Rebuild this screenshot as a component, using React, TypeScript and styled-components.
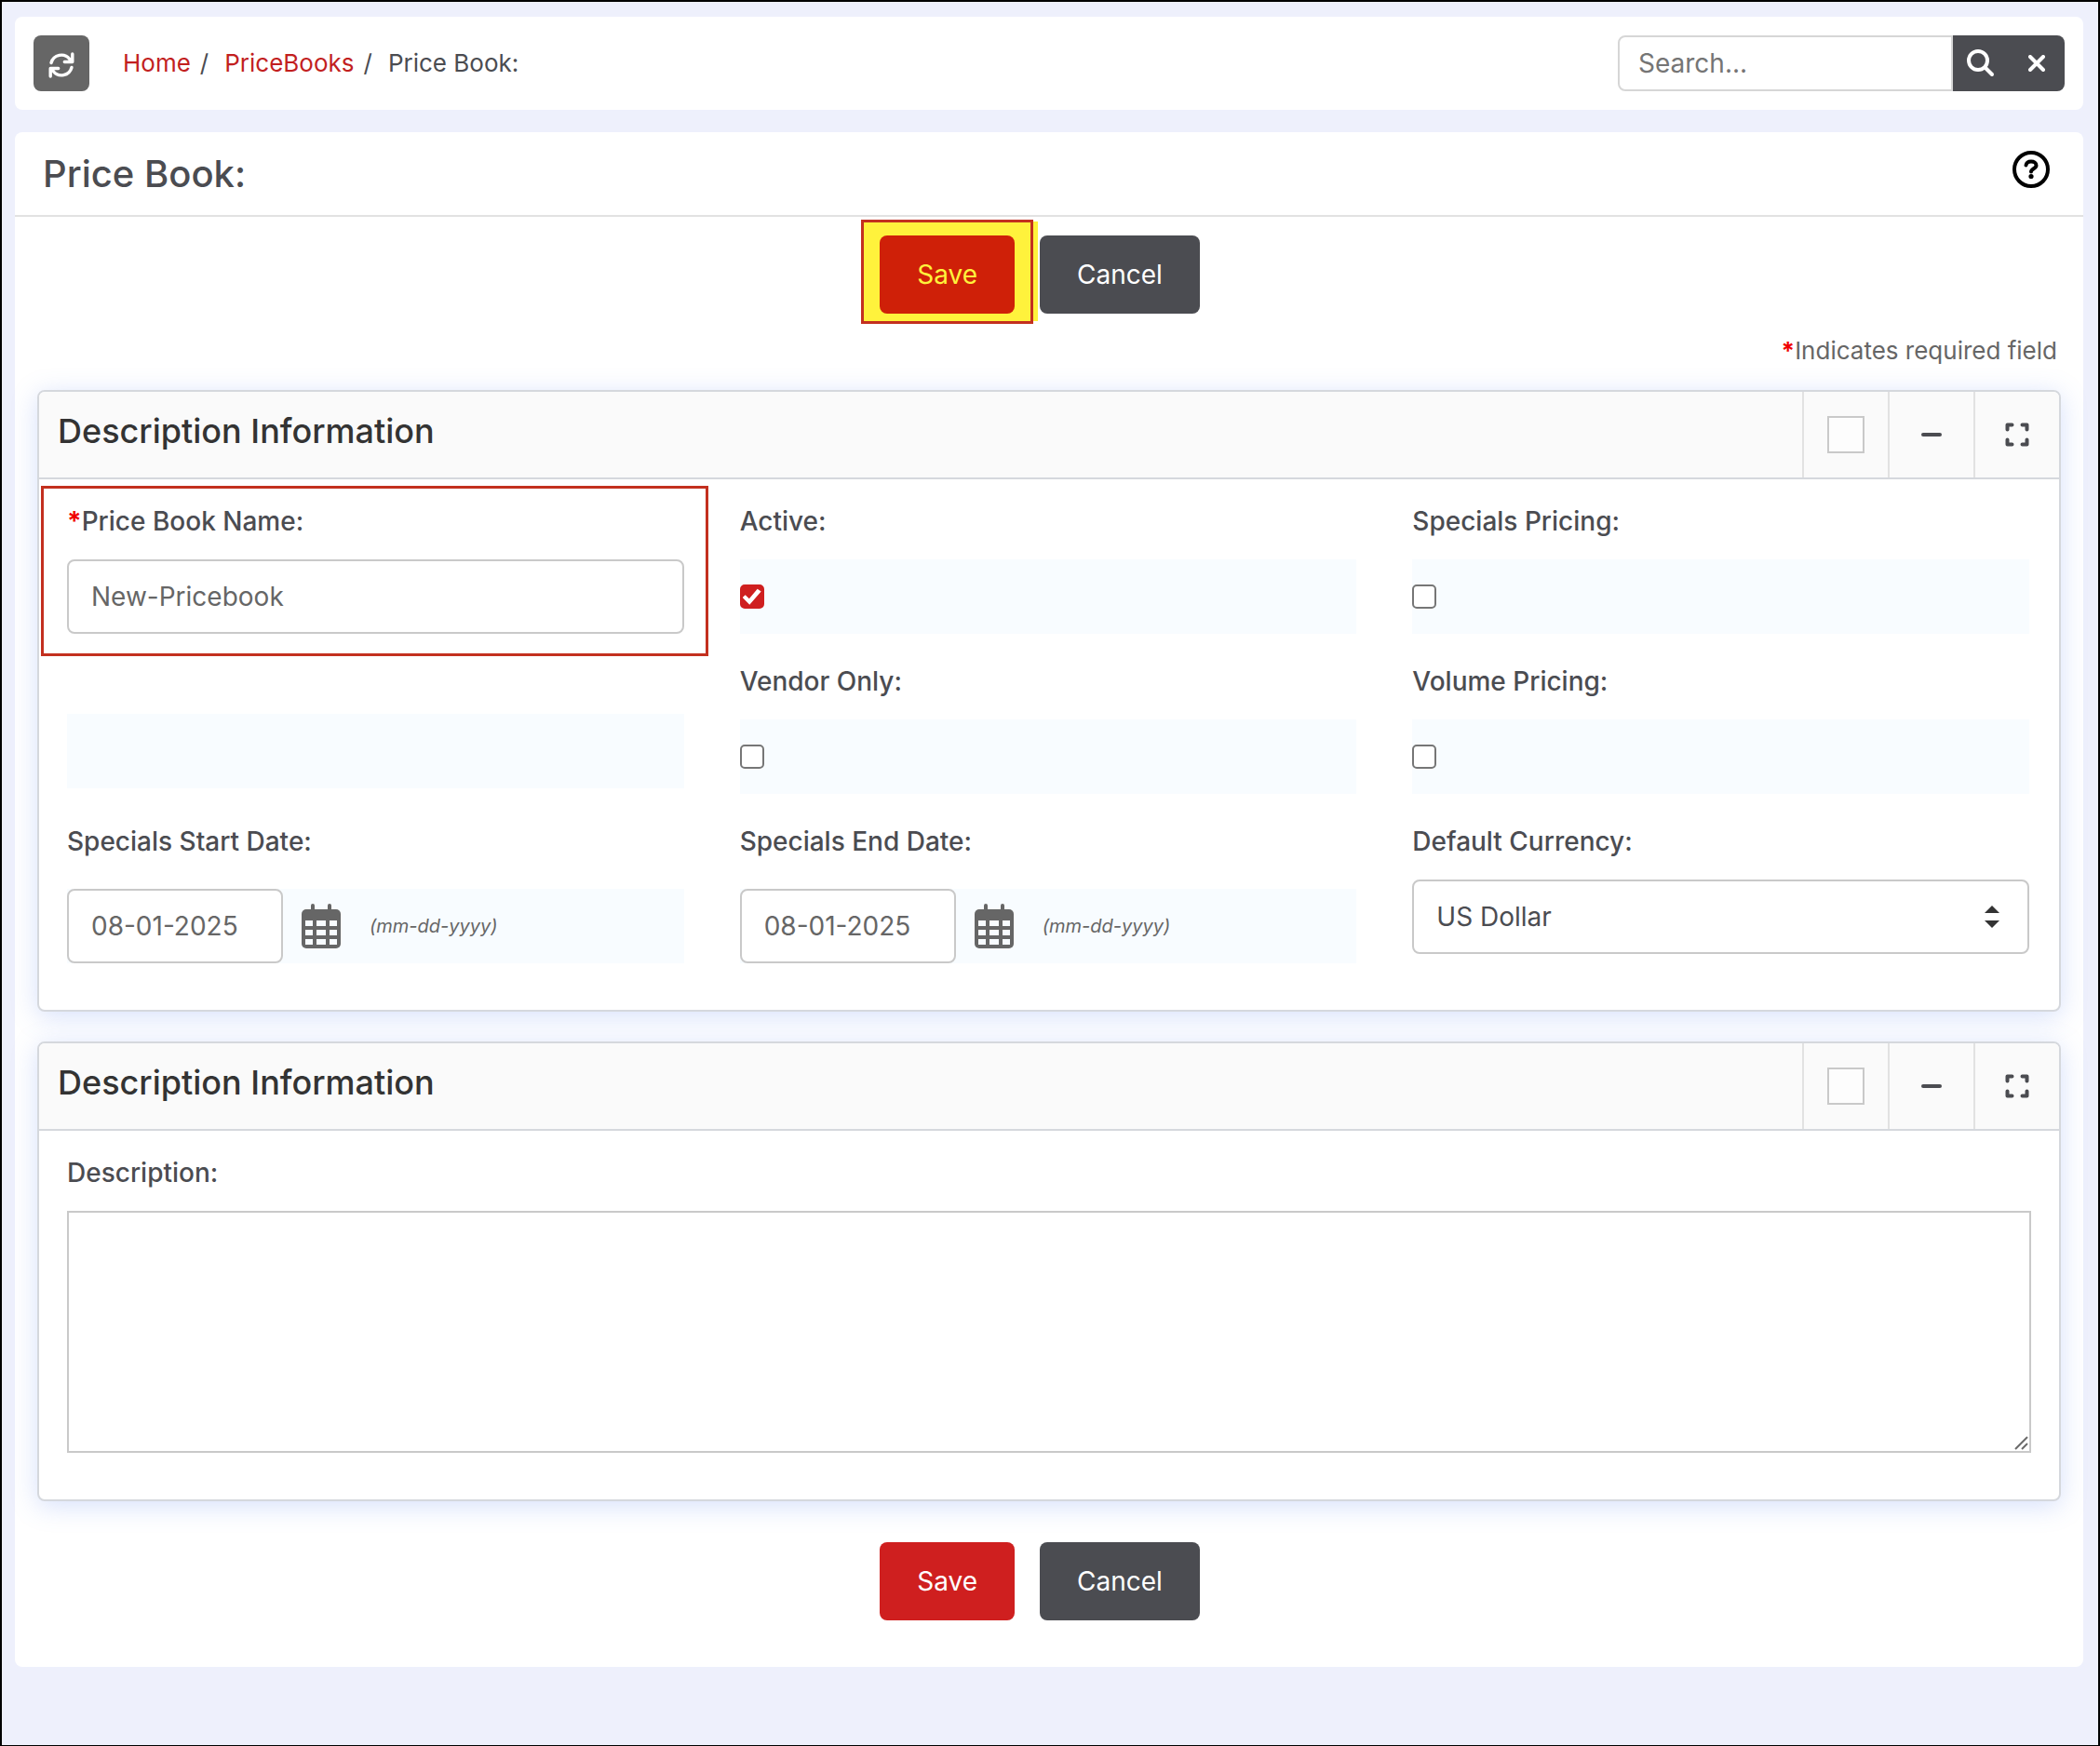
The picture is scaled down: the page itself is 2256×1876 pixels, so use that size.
import React, { useId } from "react";
import styled, { createGlobalStyle, css } from "styled-components";

const color = {
  page: "#eef0fc",
  text: "#4b4c51",
  muted: "#666666",
  heading: "#333333",
  red: "#cf1f1f",
  dark: "#4b4c51",
  line: "#e2e2e2",
  panelLine: "#d5d8dd",
  inputLine: "#c9c9c9",
  field: "#f8fcff",
  mark: "#c3301f",
};

const GlobalStyle = createGlobalStyle`
  *, *::before, *::after { box-sizing: border-box; }
  body { margin: 0; background: ${color.page}; }
  body, button, input, select, textarea {
    font-family: Inter, "Liberation Sans", sans-serif;
    font-size: 28px;
    color: ${color.text};
  }
  button { cursor: pointer; }
`;

const Frame = styled.div`
  min-height: 100vh;
  display: flex;
  flex-direction: column;
  gap: 24px;
  padding: 16px 16px 84px 14px;
  border: 2px solid #000;
  background: ${color.page};
`;

const TopBar = styled.header`
  display: flex;
  align-items: center;
  justify-content: space-between;
  padding: 20px;
  border-radius: 8px;
  background: #fff;
`;

const BarStart = styled.div`
  display: flex;
  align-items: center;
  gap: 36px;
`;

const RefreshButton = styled.button`
  display: grid;
  place-items: center;
  width: 60px;
  height: 60px;
  padding: 4px 0 0;
  border: 0;
  border-radius: 8px;
  background: ${color.muted};
  color: #fff;
`;

const Crumbs = styled.ol`
  display: flex;
  margin: 0;
  padding: 0;
  list-style: none;
  font-size: 26px;
  line-height: 40px;
`;

const Crumb = styled.li`
  & + &::before {
    content: "/";
    padding: 0 17px 0 10px;
  }
`;

const CrumbLink = styled.a`
  color: #c21f1f;
  text-decoration: none;
`;

const SearchForm = styled.form`
  display: flex;
  height: 60px;
`;

const SearchInput = styled.input`
  width: 360px;
  padding: 0 20px;
  border: 2px solid #d6d6d6;
  border-radius: 8px 0 0 8px;
  background: #fff;
  &::placeholder { color: #757575; opacity: 1; }
`;

const SearchButton = styled.button<{ $last?: boolean }>`
  display: grid;
  place-items: center;
  width: 60px;
  padding: 0;
  border: 0;
  border-radius: ${(p) => (p.$last ? "0 8px 8px 0" : "0")};
  background: ${color.dark};
  color: #fff;
`;

const Card = styled.main`
  border-radius: 8px;
  background: #fff;
`;

const CardHeader = styled.div`
  display: flex;
  justify-content: space-between;
  align-items: center;
  height: 91px;
  padding: 0 36px 0 30px;
  border-bottom: 2px solid ${color.line};
`;

const PageTitle = styled.h1`
  margin: 0;
  font-size: 40px;
  line-height: 48px;
  font-weight: 500;
`;

const HelpButton = styled.button`
  display: grid;
  place-items: center;
  padding: 0 0 10px;
  border: 0;
  background: none;
  color: #000;
`;

const Actions = styled.div`
  display: flex;
  justify-content: center;
  gap: 27px;
  padding: 20px 20px 0 0;
`;

const ActionButton = styled.button<{ $kind: "save" | "cancel"; $marked?: boolean }>`
  height: 84px;
  padding: 0 40px;
  border: 0;
  border-radius: 8px;
  background: ${(p) => (p.$kind === "cancel" ? color.dark : p.$marked ? "#cf2008" : color.red)};
  color: ${(p) => (p.$marked ? "#fff23c" : "#fff")};
`;

const Highlight = styled.div`
  position: relative;
  z-index: 0;
  display: flex;
  &::before {
    content: "";
    position: absolute;
    z-index: -2;
    inset: -15px -25px -8px -19px;
    background: #fff23c;
  }
  &::after {
    content: "";
    position: absolute;
    z-index: -1;
    inset: -17px -20px -11px -20px;
    border: 3px solid ${color.mark};
  }
`;

const RequiredNote = styled.p`
  margin: 0;
  padding: 20px 28px 22px;
  text-align: right;
  font-size: 26px;
  line-height: 40px;
  color: ${color.muted};
`;

const Star = styled.span`
  color: #f00000;
  font-weight: 700;
`;

const Panels = styled.div`
  display: grid;
  gap: 32px;
  padding: 0 24px;
`;

const PanelBox = styled.section`
  border: 2px solid ${color.panelLine};
  border-radius: 8px;
  background: #fff;
  box-shadow: 0 5px 28px rgba(90, 130, 240, 0.25);
`;

const PanelHeader = styled.div`
  display: flex;
  justify-content: space-between;
  height: 94px;
  border-bottom: 2px solid ${color.panelLine};
  border-radius: 6px 6px 0 0;
  background: #fafafa;
`;

const PanelTitle = styled.h2`
  margin: 0;
  padding: 18px 20px;
  font-size: 36px;
  line-height: 48px;
  font-weight: 500;
  color: ${color.heading};
`;

const Tools = styled.div`
  display: flex;
`;

const toolCell = css`
  display: grid;
  place-items: center;
  width: 92px;
  padding: 0;
  border: 0;
  border-left: 2px solid ${color.line};
  background: none;
  color: ${color.text};
`;

const ToolCell = styled.div`
  ${toolCell}
`;

const ToolButton = styled.button`
  ${toolCell}
`;

const ToolCheckbox = styled.input`
  appearance: none;
  width: 40px;
  height: 40px;
  margin: 0;
  border: 2px solid ${color.inputLine};
  background: #fdfdfd;
`;

const FieldGrid = styled.div`
  display: grid;
  grid-template-columns: repeat(3, minmax(0, 1fr));
  gap: 30px 60px;
  padding: 24px 32px 50px 30px;
`;

const WideField = styled.div`
  padding: 24px 30px 50px;
`;

const Field = styled.div<{ $marked?: boolean }>`
  position: relative;
  ${(p) =>
    p.$marked &&
    css`
      &::after {
        content: "";
        position: absolute;
        inset: -17px -26px -24px -28px;
        border: 3px solid ${color.mark};
        pointer-events: none;
      }
    `}
`;

const Label = styled.label`
  display: block;
  margin-bottom: 20px;
  line-height: 42px;
  font-weight: 500;
`;

const Spacer = styled.div`
  height: 56px;
`;

const Tinted = styled.div`
  display: flex;
  align-items: center;
  height: 80px;
  background: ${color.field};
`;

const DateRow = styled(Tinted)`
  margin-top: 30px;
`;

const TextInput = styled.input<{ $short?: boolean }>`
  width: ${(p) => (p.$short ? "232px" : "100%")};
  height: 80px;
  padding: 0 24px;
  border: 2px solid ${color.inputLine};
  border-radius: 8px;
  background: #fff;
  color: ${color.muted};
`;

const Checkbox = styled.input`
  appearance: none;
  display: grid;
  place-items: center;
  width: 26px;
  height: 26px;
  margin: 0;
  border: 2px solid #767676;
  border-radius: 5px;
  background: #fff;
  &:checked {
    border-color: ${color.red};
    background: ${color.red};
  }
  &:checked::before {
    content: "";
    width: 20px;
    height: 18px;
    background: #fff;
    clip-path: polygon(0 56%, 15% 40%, 36% 62%, 80% 4%, 100% 20%, 38% 98%);
  }
`;

const CalendarButton = styled.button`
  display: flex;
  margin: 0 31px 0 20px;
  padding: 0;
  border: 0;
  background: none;
  color: ${color.muted};
`;

const Hint = styled.em`
  font-size: 20px;
  color: ${color.muted};
`;

const ControlWrap = styled.div`
  position: relative;
`;

const Select = styled.select`
  appearance: none;
  display: block;
  width: 100%;
  height: 80px;
  padding: 0 60px 0 24px;
  border: 2px solid ${color.inputLine};
  border-radius: 8px;
  background: #fff;
`;

const SelectArrows = styled.svg`
  position: absolute;
  top: 28px;
  right: 32px;
  pointer-events: none;
`;

const TextArea = styled.textarea`
  display: block;
  width: 100%;
  height: 260px;
  padding: 16px;
  border: 2px solid ${color.inputLine};
  background: #fff;
  resize: vertical;
  &::-webkit-resizer { background: transparent; }
`;

const ResizeGrip = styled.svg`
  position: absolute;
  right: 2px;
  bottom: 2px;
  pointer-events: none;
`;

const Footer = styled.div`
  padding: 24px 0 50px;
`;

function RefreshIcon() {
  return (
    <svg width="28" height="28" viewBox="0 0 28 28" fill="none" stroke="currentColor" strokeWidth="3.400" strokeLinecap="round" strokeLinejoin="round" aria-hidden="true">
      <path d="M3 11.500A11.300 11.300 0 0 1 22.800 7.500L25.500 10.200M25.800 2v8.500h-8.500" />
      <path d="M25 16.500A11.300 11.300 0 0 1 5.200 20.500L2.500 17.800M2.200 26v-8.500h8.500" />
    </svg>
  );
}

function SearchIcon() {
  return (
    <svg width="30" height="30" viewBox="0 0 30 30" fill="none" stroke="currentColor" strokeWidth="4" strokeLinecap="round" aria-hidden="true">
      <circle cx="12" cy="12" r="10" />
      <path d="M19.500 19.500l7.500 7.500" />
    </svg>
  );
}

function CloseIcon() {
  return (
    <svg width="18" height="18" viewBox="0 0 18 18" fill="none" stroke="currentColor" strokeWidth="4" strokeLinecap="round" aria-hidden="true">
      <path d="M2 2l14 14M16 2L2 16" />
    </svg>
  );
}

function HelpIcon() {
  return (
    <svg width="40" height="40" viewBox="0 0 40 40" fill="none" stroke="currentColor" strokeWidth="4" aria-hidden="true">
      <circle cx="20" cy="20" r="18" />
      <path d="M14.500 15.500c.5-2.700 2.500-4 5.500-4s5.500 1.500 5.500 4.200c0 3.400-5.500 3.600-5.500 6.800" strokeLinecap="round" />
      <circle cx="20" cy="27.500" r="2.600" fill="currentColor" stroke="none" />
    </svg>
  );
}

function MinusIcon() {
  return (
    <svg width="24" height="24" viewBox="0 0 24 24" stroke="currentColor" strokeWidth="4" strokeLinecap="round" aria-hidden="true">
      <path d="M3 12h18" />
    </svg>
  );
}

function ExpandIcon() {
  return (
    <svg width="26" height="26" viewBox="0 0 26 26" fill="none" stroke="currentColor" strokeWidth="4" strokeLinecap="round" strokeLinejoin="round" aria-hidden="true">
      <path d="M2.500 7.500v-5h5M18.500 2.500h5v5M23.500 18.500v5h-5M7.500 23.500h-5v-5" />
    </svg>
  );
}

function CalendarIcon() {
  return (
    <svg width="42" height="48" viewBox="0 0 42 48" aria-hidden="true">
      <rect x="10" y="0" width="4" height="10" rx="2" fill="currentColor" />
      <rect x="28" y="0" width="4" height="10" rx="2" fill="currentColor" />
      <rect x="0" y="6" width="42" height="42" rx="5" fill="currentColor" />
      {[18, 28, 38].map((y) =>
        [4, 16, 30].map((x) => (
          <rect key={`${x}-${y}`} x={x} y={y} width={x === 16 ? 10 : 8} height="6" fill="#f8fcff" />
        )),
      )}
    </svg>
  );
}

function Panel({ title, children }: { title: string; children: React.ReactNode }) {
  return (
    <PanelBox>
      <PanelHeader>
        <PanelTitle>{title}</PanelTitle>
        <Tools>
          <ToolCell>
            <ToolCheckbox type="checkbox" aria-label="Select section" />
          </ToolCell>
          <ToolButton type="button" aria-label="Collapse">
            <MinusIcon />
          </ToolButton>
          <ToolButton type="button" aria-label="Full screen">
            <ExpandIcon />
          </ToolButton>
        </Tools>
      </PanelHeader>
      {children}
    </PanelBox>
  );
}

function CheckField({ label, checked }: { label: string; checked?: boolean }) {
  const id = useId();
  return (
    <Field>
      <Label htmlFor={id}>{label}</Label>
      <Tinted>
        <Checkbox id={id} type="checkbox" defaultChecked={checked} />
      </Tinted>
    </Field>
  );
}

function DateField({ label, value }: { label: string; value: string }) {
  const id = useId();
  return (
    <Field>
      <Label htmlFor={id}>{label}</Label>
      <DateRow>
        <TextInput $short id={id} type="text" defaultValue={value} />
        <CalendarButton type="button" aria-label={`Pick ${label}`}>
          <CalendarIcon />
        </CalendarButton>
        <Hint>(mm-dd-yyyy)</Hint>
      </DateRow>
    </Field>
  );
}

export default function App() {
  return (
    <>
      <GlobalStyle />
      <Frame>
        <TopBar>
          <BarStart>
            <RefreshButton type="button" aria-label="Refresh">
              <RefreshIcon />
            </RefreshButton>
            <nav aria-label="Breadcrumb">
              <Crumbs>
                <Crumb>
                  <CrumbLink href="#home">Home</CrumbLink>
                </Crumb>
                <Crumb>
                  <CrumbLink href="#pricebooks">PriceBooks</CrumbLink>
                </Crumb>
                <Crumb>Price Book:</Crumb>
              </Crumbs>
            </nav>
          </BarStart>
          <SearchForm role="search" onSubmit={(e) => e.preventDefault()}>
            <SearchInput type="text" placeholder="Search..." aria-label="Search" />
            <SearchButton type="submit" aria-label="Search">
              <SearchIcon />
            </SearchButton>
            <SearchButton $last type="reset" aria-label="Clear">
              <CloseIcon />
            </SearchButton>
          </SearchForm>
        </TopBar>

        <Card>
          <CardHeader>
            <PageTitle>Price Book:</PageTitle>
            <HelpButton type="button" aria-label="Help">
              <HelpIcon />
            </HelpButton>
          </CardHeader>

          <Actions>
            <Highlight>
              <ActionButton type="button" $kind="save" $marked>
                Save
              </ActionButton>
            </Highlight>
            <ActionButton type="button" $kind="cancel">
              Cancel
            </ActionButton>
          </Actions>

          <RequiredNote>
            <Star>*</Star>Indicates required field
          </RequiredNote>

          <Panels>
            <Panel title="Description Information">
              <FieldGrid>
                <Field $marked>
                  <Label htmlFor="name">
                    <Star>*</Star>Price Book Name:
                  </Label>
                  <TextInput id="name" type="text" defaultValue="New-Pricebook" />
                </Field>
                <CheckField label="Active:" checked />
                <CheckField label="Specials Pricing:" />
                <Field>
                  <Spacer />
                  <Tinted />
                </Field>
                <CheckField label="Vendor Only:" />
                <CheckField label="Volume Pricing:" />
                <DateField label="Specials Start Date:" value="08-01-2025" />
                <DateField label="Specials End Date:" value="08-01-2025" />
                <Field>
                  <Label htmlFor="currency">Default Currency:</Label>
                  <ControlWrap>
                    <Select id="currency" defaultValue="usd">
                      <option value="usd">US Dollar</option>
                    </Select>
                    <SelectArrows width="16" height="24" viewBox="0 0 16 24" fill="#333" aria-hidden="true">
                      <path d="M8 0l8 8H0zM0 16h16l-8 8z" />
                    </SelectArrows>
                  </ControlWrap>
                </Field>
              </FieldGrid>
            </Panel>

            <Panel title="Description Information">
              <WideField>
                <Label htmlFor="description">Description:</Label>
                <ControlWrap>
                  <TextArea id="description" />
                  <ResizeGrip width="16" height="16" viewBox="0 0 16 16" stroke="#6b6b6b" strokeWidth="2" aria-hidden="true">
                    <path d="M1 14L14 1M8 14l6-6" />
                  </ResizeGrip>
                </ControlWrap>
              </WideField>
            </Panel>
          </Panels>

          <Footer>
            <Actions>
              <ActionButton type="button" $kind="save">
                Save
              </ActionButton>
              <ActionButton type="button" $kind="cancel">
                Cancel
              </ActionButton>
            </Actions>
          </Footer>
        </Card>
      </Frame>
    </>
  );
}
